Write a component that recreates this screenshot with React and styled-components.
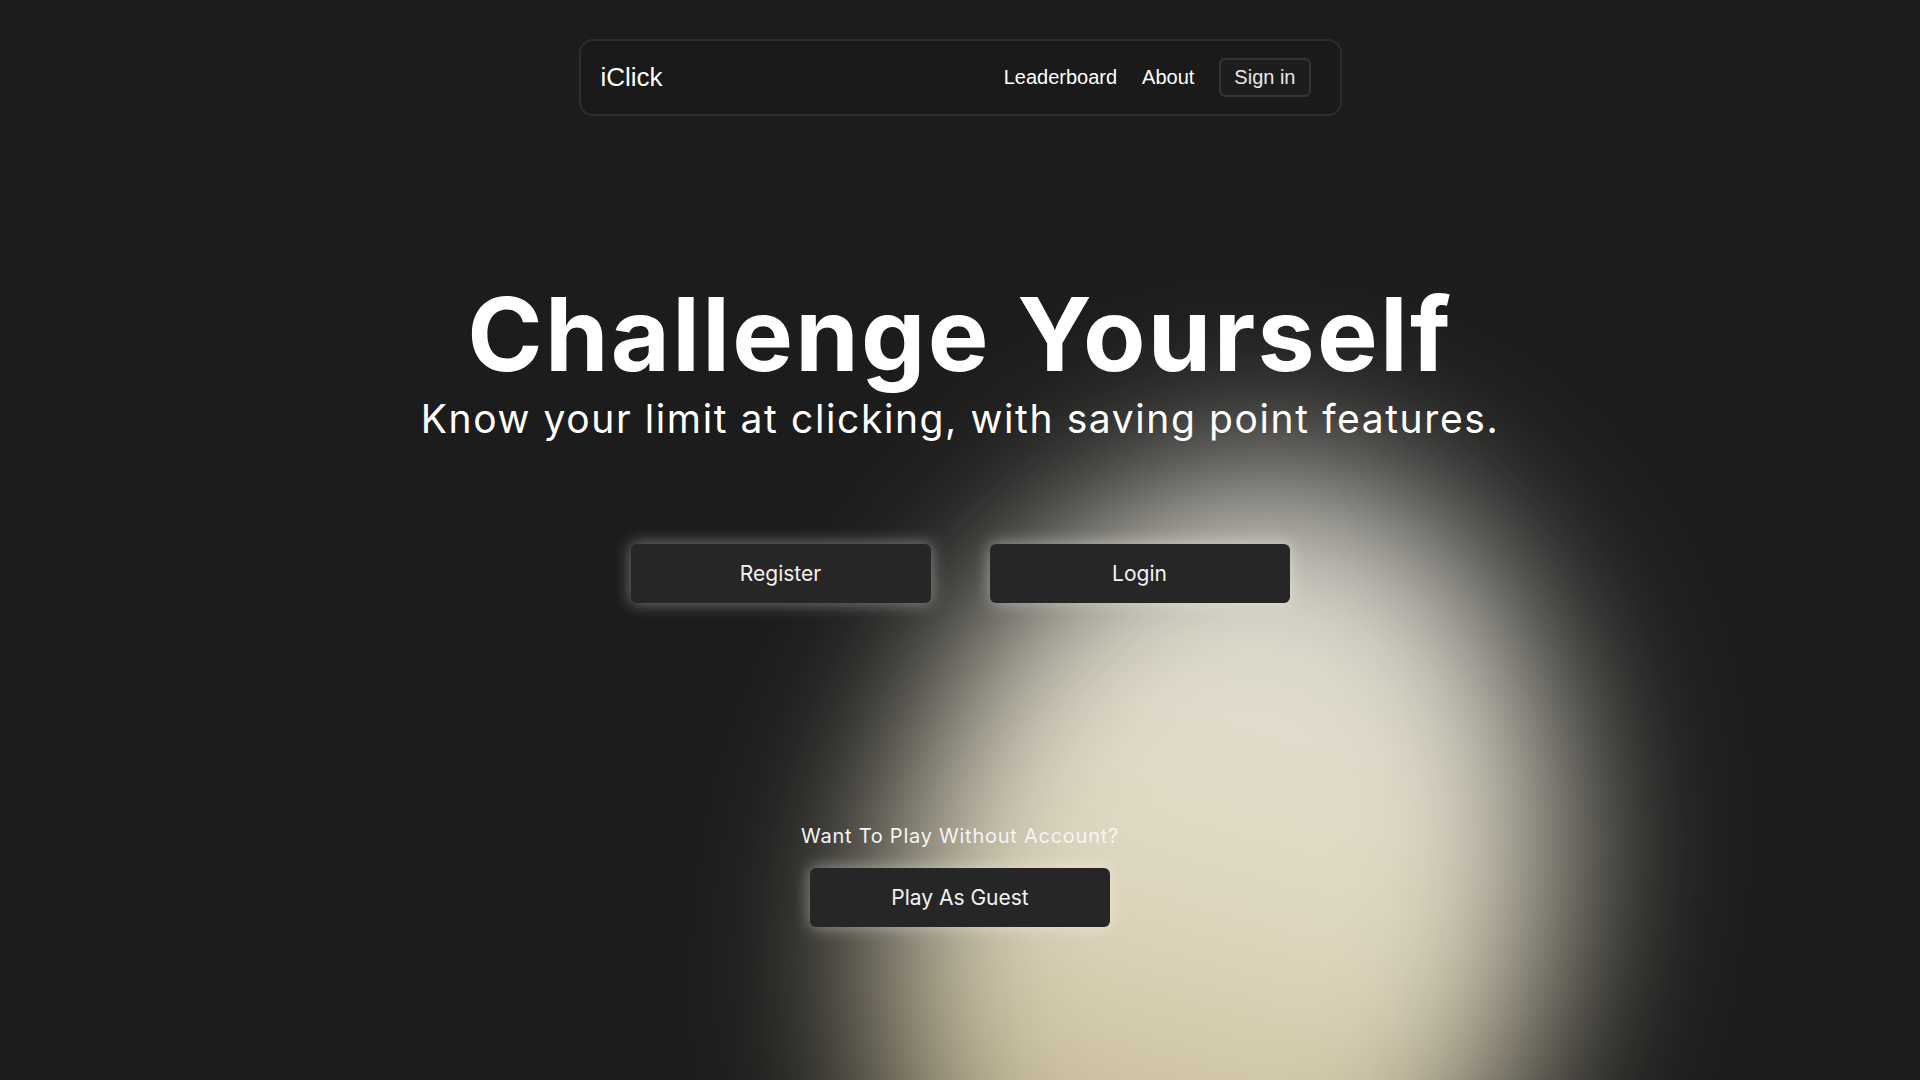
import React from 'react';
import styled, { createGlobalStyle } from 'styled-components';

const GlobalStyle = createGlobalStyle`
  html, body {
    margin: 0;
    padding: 0;
    background: #1c1c1c;
  }
  body {
    font-family: Inter, "Noto Sans", sans-serif;
    color: #ffffff;
    overflow: hidden;
  }
  * { box-sizing: border-box; }
`;

const Page = styled.div`
  position: relative;
  min-height: 100vh;
  overflow: hidden;
  background: #1c1c1c;
`;

const Glow = styled.div`
  position: absolute;
  left: calc(50% + 260px - 330px);
  top: 460px;
  width: 660px;
  height: 900px;
  border-radius: 50%;
  background: linear-gradient(180deg, #d6d5d0 0%, #e3decc 30%, #ddd5bb 55%, #c2b690 85%, #b0a47e 100%);
  transform: rotate(15deg);
  filter: blur(88px);
  pointer-events: none;
  z-index: 0;
`;

const Content = styled.div`
  position: relative;
  z-index: 1;
  display: flex;
  flex-direction: column;
  align-items: center;
`;

const Nav = styled.nav`
  margin-top: 39px;
  width: 763px;
  height: 77px;
  border: 2px solid #2d2d2d;
  border-radius: 14px;
  background: #1a1a1a;
  display: flex;
  align-items: center;
  justify-content: space-between;
  padding: 0 29px 0 20px;
  font-family: "Liberation Sans", Arial, sans-serif;
`;

const Brand = styled.a`
  font-size: 26px;
  color: #ffffff;
  text-decoration: none;
`;

const NavLinks = styled.div`
  display: flex;
  align-items: center;
  gap: 25px;
`;

const NavLink = styled.a`
  font-size: 20px;
  color: #ffffff;
  text-decoration: none;
`;

const SignIn = styled.button`
  font-family: "Liberation Sans", Arial, sans-serif;
  font-size: 20px;
  line-height: 23px;
  padding: 6px 13px;
  border: 2px solid #343434;
  border-radius: 6px;
  background: #1d1d1d;
  color: #e8e8e8;
  cursor: pointer;
`;

const Title = styled.h1`
  margin: 157px 0 0;
  font-size: 102px;
  line-height: 1.2;
  font-weight: 700;
  letter-spacing: 2.3px;
  color: #ffffff;
`;

const Subtitle = styled.p`
  margin: 0;
  font-size: 39px;
  line-height: 1.25;
  font-weight: 400;
  letter-spacing: 1.6px;
  color: #ffffff;
`;

const ButtonRow = styled.div`
  margin-top: 100px;
  display: flex;
  gap: 59px;
`;

const ActionButton = styled.button`
  width: 300px;
  height: 59px;
  border: none;
  border-radius: 6px;
  background: #262626;
  color: #f2f2f2;
  font-family: Inter, "Noto Sans", sans-serif;
  font-size: 21px;
  font-weight: 400;
  letter-spacing: 0;
  box-shadow: 0 0 16px 1px rgba(255, 255, 255, 0.4);
  cursor: pointer;
`;

const Prompt = styled.p`
  margin: 221px 0 0;
  font-size: 20px;
  line-height: 24px;
  letter-spacing: 0.75px;
  color: #f4f4f4;
`;

const GuestButton = styled(ActionButton)`
  margin-top: 20px;
`;

export default function App() {
  return (
    <>
      <GlobalStyle />
      <Page>
        <Glow />
        <Content>
          <Nav>
            <Brand href="#">iClick</Brand>
            <NavLinks>
              <NavLink href="#">Leaderboard</NavLink>
              <NavLink href="#">About</NavLink>
              <SignIn>Sign in</SignIn>
            </NavLinks>
          </Nav>
          <Title>Challenge Yourself</Title>
          <Subtitle>Know your limit at clicking, with saving point features.</Subtitle>
          <ButtonRow>
            <ActionButton>Register</ActionButton>
            <ActionButton>Login</ActionButton>
          </ButtonRow>
          <Prompt>Want To Play Without Account?</Prompt>
          <GuestButton>Play As Guest</GuestButton>
        </Content>
      </Page>
    </>
  );
}
